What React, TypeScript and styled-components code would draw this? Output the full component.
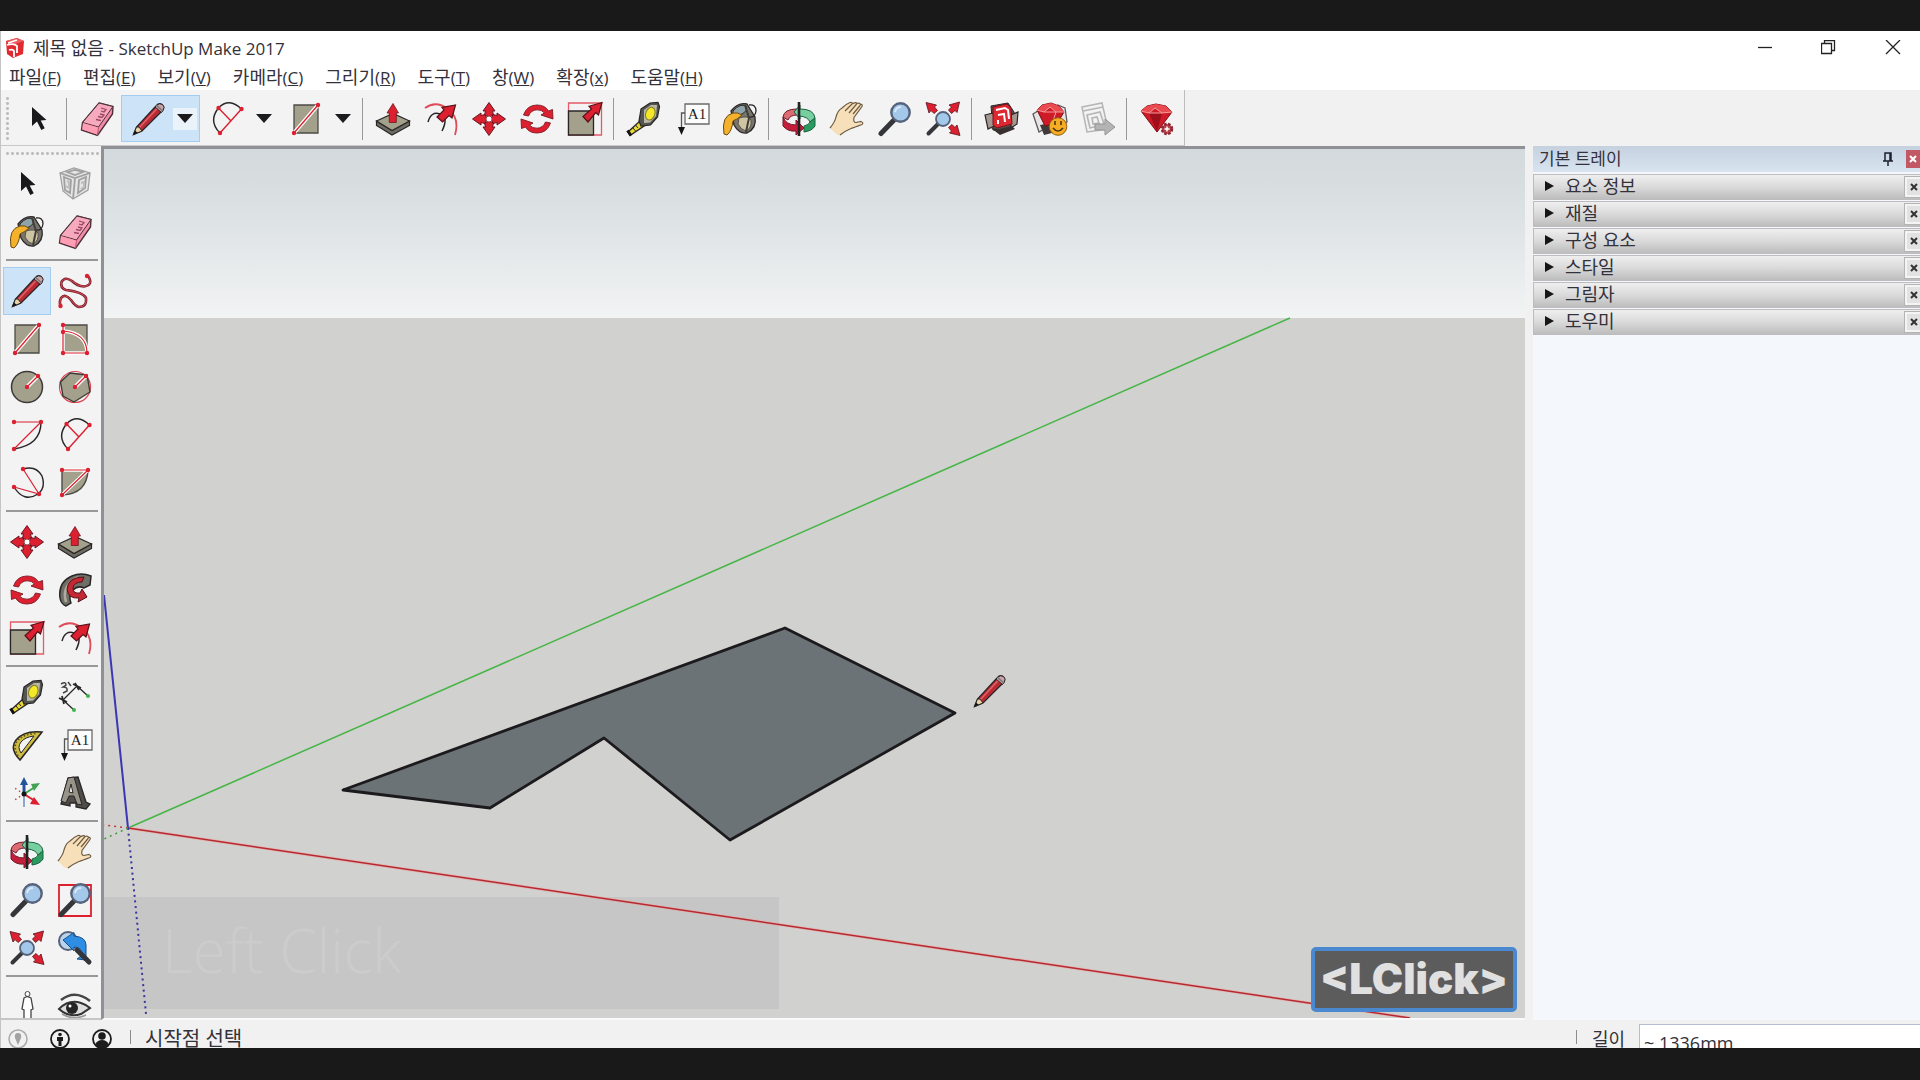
import React from "react";
import styled, { createGlobalStyle, css } from "styled-components";

const UI_FONT = `"Open Sans", "Noto Sans CJK KR", sans-serif`;
const RED = "#dc2030";
const INK = "#2a2627";
const STONE = "#a3a08c";

const GlobalStyle = createGlobalStyle`
  *, *::before, *::after { box-sizing: border-box; }
  body { margin: 0; background: #191919; font-family: ${UI_FONT}; color: #33313a; }
  button { margin: 0; padding: 0; border: 0; background: none; font: inherit; color: inherit; }
`;

/* ---------- window frame ---------- */

const Screen = styled.div`
  height: 100vh;
  padding: 31px 0 32px;
  background: #191919;
  overflow: hidden;
`;

const Window = styled.div`
  display: flex;
  flex-direction: column;
  height: 100%;
  background: #f1f1f1;
  border-left: 1px solid #c4c4c4;
  overflow: hidden;
`;

const TitleBar = styled.header`
  display: flex;
  align-items: center;
  flex: none;
  height: 34px;
  padding-left: 4px;
  background: #fff;
`;

const Title = styled.h1`
  flex: 1;
  margin: 0 0 0 8px;
  font-size: 18px;
  line-height: 24px;
  font-weight: 400;
`;

const WindowButtons = styled.div`
  display: flex;
  gap: 10px;
`;

const WindowButton = styled.button`
  display: grid;
  place-items: center;
  width: 54px;
  height: 30px;
`;

const MenuBar = styled.nav`
  display: flex;
  flex: none;
  gap: 22px;
  height: 25px;
  padding-left: 8px;
  background: #fff;
`;

const MenuItem = styled.button`
  font-size: 18px;
  line-height: 24px;
  white-space: nowrap;
`;

const Latin = styled.span`
  font-size: 17px;
`;

/* ---------- tool bars ---------- */

const TopStrip = styled.div`
  display: flex;
  flex: none;
  height: 56px;
  background: #f1f1f1;
`;

const TopTools = styled.div`
  display: flex;
  align-items: center;
  padding: 2px 3px 0 4px;
  background: #f3f3f4;
  border-right: 1px solid #bcbcbe;
  border-bottom: 1px solid #c8c8ca;
`;

const Grip = styled.span<{ $across?: boolean }>`
  flex: none;
  ${(p) =>
    p.$across
      ? css`
          width: 94px;
          height: 4px;
          margin: 5px 0 5px 2px;
        `
      : css`
          width: 5px;
          height: 46px;
          margin-right: 4px;
        `}
  background-image: radial-gradient(circle, #bdbdbd 1px, transparent 2px);
  background-size: 5px 5px;
`;

const ToolButton = styled.button<{ $on?: boolean }>`
  display: grid;
  place-items: center;
  flex: none;
  width: 48px;
  height: 48px;
  border: 1px solid ${(p) => (p.$on ? "#a5cdf0" : "transparent")};
  background: ${(p) => (p.$on ? "#cde3f7" : "transparent")};
`;

const Split = styled.div<{ $on?: boolean }>`
  display: flex;
  align-items: center;
  flex: none;
  width: 79px;
  height: 47px;
  border: 1px solid ${(p) => (p.$on ? "#a5cdf0" : "transparent")};
  background: ${(p) => (p.$on ? "#cde3f7" : "transparent")};
`;

const SplitMain = styled.button`
  display: grid;
  place-items: center;
  width: 51px;
  height: 45px;
`;

const SplitArrow = styled.button<{ $on?: boolean }>`
  display: grid;
  place-items: center;
  width: 24px;
  height: 22px;
  background: ${(p) => (p.$on ? "#eaf2fa" : "transparent")};
`;

const Rule = styled.span<{ $across?: boolean }>`
  flex: none;
  background: #98989a;
  ${(p) =>
    p.$across
      ? css`
          height: 2px;
          margin: 3px 3px 6px 3px;
        `
      : css`
          width: 1px;
          height: 42px;
          margin: 0 6px 0 4px;
        `}
`;

const Body = styled.div`
  display: flex;
  flex: 1;
  min-height: 0;
`;

const SideTools = styled.aside`
  display: flex;
  flex-direction: column;
  flex: none;
  width: 100px;
  padding-left: 2px;
  background: #f3f3f4;
  border-bottom: 2px solid #c6c6c8;
  overflow: hidden;
`;

const SideGroup = styled.div`
  display: grid;
  flex: none;
  grid-template-columns: 48px 48px;
`;

/* ---------- drawing area ---------- */

const Viewport = styled.main`
  position: relative;
  flex: 1;
  min-width: 0;
  border: solid #8f9196;
  border-width: 3px 0 0 3px;
  border-bottom: 2px solid #fafafa;
  background: linear-gradient(#d3d9dc 0, #dde2e4 70px, #f2f4f4 169px, #d1d1cf 169px);
  overflow: hidden;
`;

const Scene = styled.svg`
  position: absolute;
  top: 0;
  left: 0;
`;

const Caption = styled.div`
  position: absolute;
  left: 0;
  bottom: 9px;
  width: 675px;
  height: 112px;
  padding-left: 58px;
  background: #c6c6c6;
  color: #cccccc;
  font-size: 60px;
  font-weight: 300;
  line-height: 106px;
`;

const KeyBadge = styled.div`
  position: absolute;
  right: 8px;
  bottom: 6px;
  display: grid;
  place-items: center;
  width: 206px;
  height: 65px;
  border: 4px solid #4a88d0;
  border-radius: 5px;
  background: #5c5c5c;
  color: #e0e0e0;
  font: 900 42px/44px Inter, sans-serif;
  padding-bottom: 2px;
`;

/* ---------- tray ---------- */

const Tray = styled.aside`
  flex: none;
  width: 387px;
  margin-left: 8px;
  background: #f4f7fc;
  overflow: hidden;
`;

const TrayTitle = styled.div`
  display: flex;
  align-items: center;
  height: 26px;
  margin-bottom: 2px;
  padding-left: 6px;
  background: linear-gradient(#c6d1e0, #d9e4f1);
`;

const TrayName = styled.h2`
  flex: 1;
  margin: 0;
  font-size: 17px;
  line-height: 24px;
  font-weight: 400;
`;

const PinButton = styled.button`
  display: grid;
  place-items: center;
  width: 24px;
  height: 20px;
`;

const TrayClose = styled.button`
  display: grid;
  place-items: center;
  width: 14px;
  height: 18px;
  margin-left: 6px;
  background: #c25863;
`;

const Panel = styled.section`
  display: flex;
  align-items: center;
  height: 26px;
  margin-bottom: 1px;
  border: 1px solid #bdbdbf;
  border-right: 0;
  background: linear-gradient(#efefef, #dadada 50%, #bdbdbd);
`;

const PanelToggle = styled.button`
  display: flex;
  align-items: center;
  flex: 1;
  gap: 11px;
  height: 24px;
  padding: 0 0 2px 11px;
  font-size: 18px;
  line-height: 22px;
  text-align: left;
`;

const PanelClose = styled.button`
  display: grid;
  place-items: center;
  width: 15px;
  height: 20px;
  border: 2px solid #f4f4f4;
  border-right: 0;
  outline: 1px solid #b4b4b4;
  background: #e2e2e2;
`;

/* ---------- status bar ---------- */

const StatusBar = styled.footer`
  display: flex;
  align-items: center;
  flex: none;
  height: 28px;
  padding-left: 7px;
  background: #f1f1f1;
  overflow: hidden;
`;

const StatusButtons = styled.div`
  display: flex;
  gap: 22px;
  padding: 9px 18px 0 0;
`;

const StatusButton = styled.button`
  display: grid;
  place-items: center;
  width: 20px;
  height: 20px;
`;

const StatusRule = styled.span`
  width: 1px;
  height: 14px;
  margin-top: 6px;
  background: #8c8c8c;
`;

const StatusText = styled.p`
  flex: 1;
  margin: 10px 0 0 14px;
  font-size: 20px;
  line-height: 18px;
`;

const Measure = styled.label`
  margin: 10px 14px 0 15px;
  font-size: 18px;
  line-height: 18px;
`;

const MeasureInput = styled.input`
  align-self: flex-start;
  flex: none;
  width: 281px;
  height: 38px;
  margin-top: 4px;
  padding: 0 4px;
  border: 1px solid #b5bdd0;
  border-right: 0;
  background: #fff;
  color: #33313a;
  font: 18px/24px ${UI_FONT};
`;

/* ---------- icons, all on a 36 unit grid ---------- */

const Icon = ({ children }: { children: React.ReactNode }) => (
  <svg width="36" height="36" viewBox="0 0 36 36" fill="none" aria-hidden="true">
    {children}
  </svg>
);

const Dots = ({ at }: { at: number[][] }) => (
  <>
    {at.map(([x, y]) => (
      <circle key={`${x}-${y}`} cx={x} cy={y} r="2.2" fill={RED} />
    ))}
  </>
);

const PencilShape = () => (
  <>
    <path d="M3.5 33.5 6.5 26 26 5q3-3.5 6-1.5 3 2.5.5 6L12 30z" fill="#b92a33" stroke={INK} strokeWidth="1.3" />
    <path d="M9 27 28.5 6" stroke="#e0616a" strokeWidth="1.5" />
    <path d="M3.5 33.5 6.5 26l2.5 0 3 4z" fill="#e9d3a4" stroke={INK} strokeWidth="1" />
    <path d="m3.5 33.5 1.5-4 2.5 2.2z" fill="#111" />
    <path d="m25 6 6.5 5.5 1.5-2q2.5-3.5-.5-6-3-2-6 1z" fill="#c9a3a6" stroke={INK} />
    <path d="m26.5 4.5 6 5.3" stroke="#777" strokeWidth="1.5" />
  </>
);

const FatArrow = () => (
  <path d="M35 1.5 31.5 14l-2.8-2.3L21 21l-5-5.5 8.5-7.5L22 5.2z" fill={RED} stroke="#571018" strokeWidth="1.2" />
);

const GlassShape = () => (
  <>
    <path d="M17 19 4 32.5" stroke="#35363a" strokeWidth="5" strokeLinecap="round" />
    <circle cx="23.5" cy="11.5" r="9.2" fill="#a3c8ea" stroke="#56627a" strokeWidth="2.4" />
    <path d="M18 11q1-5 6-5" stroke="#d8eafa" strokeWidth="2" />
  </>
);

const SelectIcon = () => (
  <Icon>
    <path d="M12 6v19l5-4.5 4.3 8.5 3.4-1.8-4-7.7L26.5 19z" fill="#19191b" />
  </Icon>
);

const EraserIcon = () => (
  <Icon>
    <path d="M20 2 34 5.5 33.5 13 18.5 34.5 2.5 29l1-7.5z" fill="#f48aa6" stroke="#4c3038" strokeWidth="1.4" />
    <path d="M20 2 34 5.5 19.5 26l-16-4.5z" fill="#f7a9bd" stroke="#4c3038" />
    <path d="m4 22 15.3 4.5-1 7L3.2 28.5z" fill="#ff9db5" />
    <path d="m22 7 5 1.5-2 2.5-3-1m-1 3 4 1-2 2.5-4-1m-2 3 5 1" stroke="#9c4763" strokeWidth="1.3" />
    <path d="M19.5 26 18.5 34.5" stroke="#b55872" />
  </Icon>
);

const PencilIcon = () => (
  <Icon>
    <PencilShape />
  </Icon>
);

const PieIcon = () => (
  <Icon>
    <path d="M32.5 8Q20-4 9.500 7Q-1 20 11 32" stroke={INK} strokeWidth="1.400" />
    <path d="M32.5 8 11 32M9.500 7 22 20" stroke={RED} strokeWidth="1.400" />
    <Dots at={[[32.5, 8], [11, 32], [9.5, 7]]} />
  </Icon>
);

const RectIcon = () => (
  <Icon>
    <path d="M6 4h24v28H6z" fill={STONE} stroke="#4d4b44" strokeWidth="1.3" />
    <path d="M6 32 30 4" stroke="#fff" strokeWidth="4" />
    <path d="M6 32 30 4" stroke={RED} strokeWidth="1.3" />
    <Dots at={[[6, 32], [30, 4]]} />
  </Icon>
);

const PushPullIcon = () => (
  <Icon>
    <path d="M1.5 20v4.5L17 34l17.5-9.5V20L17 29.5z" fill="#6d6c62" stroke={INK} strokeWidth="1.2" />
    <path d="M1.5 20 18 12.5 34.5 20 17 29.5z" fill={STONE} stroke={INK} strokeWidth="1.2" />
    <path d="M18 2.5 23.5 12h-2.2v9.5h-7V12H12z" fill={RED} stroke="#6d1820" strokeWidth=".8" />
  </Icon>
);

const OffsetIcon = () => (
  <Icon>
    <path d="M2 7Q13-1 25 8t7 26" stroke="#dd4c58" strokeWidth="1.8" />
    <path d="M5 21Q8 10 17 13t2 17" stroke={INK} strokeWidth="1.5" />
    <path d="M32.5 4 29 17l-3-2.5L19.5 21 14 16l7-7-2-2.5z" fill={RED} stroke="#571018" strokeWidth="1.2" />
  </Icon>
);

const MoveIcon = () => (
  <Icon>
    {[0, 90, 180, 270].map((a) => (
      <path key={a} transform={`rotate(${a} 18 18)`} d="M18 1.5 24 10h-2.5l1 4-4.5 2-4.5-2 1-4H12z" fill={RED} stroke="#571018" strokeWidth=".9" />
    ))}
    <circle cx="18" cy="18" r="2.5" fill="#fff" />
  </Icon>
);

const RotateIcon = () => (
  <Icon>
    {[0, 180].map((a) => (
      <path key={a} transform={`rotate(${a} 18 18)`} d="M4.5 14Q8 4 18 4q8 0 11.5 6l4-1.5L34 18l-12-4 3.5-2Q22.5 8.500 18 8.800 12 9 9.500 15z" fill={RED} stroke="#7d1822" strokeWidth=".9" />
    ))}
  </Icon>
);

const ScaleIcon = () => (
  <Icon>
    <path d="M1.5 2h33v32h-33z" stroke="#e25b66" strokeWidth="1.3" />
    <path d="M1.5 10h25v24h-25z" fill={STONE} stroke={INK} strokeWidth="1.3" />
    <FatArrow />
  </Icon>
);

const TapeIcon = () => (
  <Icon>
    <path d="M14 20 2 31l2 3.5L18 25z" fill="#e9d934" stroke={INK} strokeWidth="1.3" />
    <path d="m1.5 29.5 3.5 5" stroke="#111" strokeWidth="3" />
    <path d="M15 8 24 2l8-.5 1.500 4-2 10.500-7 8-9.500 1-2-5z" fill="#55554f" stroke={INK} strokeWidth="1.2" />
    <path d="m18 9 7-5 6 0-1 11-6 6.500-6 .5z" fill="#b8b7a8" />
    <ellipse cx="24.5" cy="12.5" rx="4.5" ry="6.5" transform="rotate(20 24 12)" fill="#f4e827" stroke="#827a20" />
    <path d="m7 27 2.500 3m0-6 2.500 3" stroke={INK} />
  </Icon>
);

const TextIcon = () => (
  <Icon>
    <path d="M11 3h24v20H11z" fill="#fcfcfc" stroke="#6a6a6a" strokeWidth="1.3" />
    <path d="M11 12H7.5v15" stroke="#555" strokeWidth="1.3" />
    <path d="M4 26h7l-3.500 8z" fill="#151515" />
    <text x="23" y="18" textAnchor="middle" fontFamily="Liberation Serif, serif" fontSize="15" fill="#222">A1</text>
  </Icon>
);

const PaintIcon = () => (
  <Icon>
    <path d="M9 10Q16 1 25 3l8 13q2 11-8 16-8 1-13-8z" fill="#77756c" stroke={INK} strokeWidth="1.3" />
    <path d="M11 10Q18 2 24 5q2 5-4 8t-9 3z" fill="#8fa4aa" stroke={INK} />
    <path d="M17 17q9-3 12 2 1 8-5 11-5-1-8-7z" fill="#cfc4a2" stroke="#57534a" />
    <path d="M27 4q7-1 7 6-1 7-7 6" stroke={INK} strokeWidth="1.3" />
    <path d="M2 33Q-1 15 11 12q5-1 9 2-4 4-9 6-1 10-6 14z" fill="#f4b22c" stroke="#6b4b14" />
    <path d="m23 4 4 13-3 14" stroke="#403e3a" strokeWidth="2" />
  </Icon>
);

const OrbitIcon = () => (
  <Icon>
    <path d="M16 8Q3 8 2 16l5 3q2-5 9-5z" fill="#dd6b72" stroke="#6e1a27" />
    <path d="M2 16v9q5 6 13 5v4l8-7-8-8v5Q5 24 2 16z" fill="#c41f3a" stroke="#6e1a27" />
    <path d="M19 4v4q14 0 15 9l-5 4q-2-5-10-6v3l-6-7z" fill="#77cfa0" stroke="#1b6140" />
    <path d="M34 17v8q-3 5-11 6v-6q5-1 6-4z" fill="#2b9a5e" stroke="#1b6140" />
    <path d="M18 1v34" stroke="#222" strokeWidth="2.6" />
  </Icon>
);

const PanIcon = () => (
  <Icon>
    <path d="M1 27Q6 21 7 16 9 9 13 7 17 3 21 1.500q3-.5 2 1.500 4-2.500 5-.5 3-1 3.500 1 2.500-.5 1.500 2l-8 11q-1 5 2 5l5-1q3 1.500 1 3-8 3-11 4-7 3-11 6.500-3 1-6-3z" fill="#f7e0b9" />
    <path d="M1 27Q6 21 7 16 9 9 13 7 17 3 21 1.500q3-.5 2 1.500 4-2.500 5-.5 3-1 3.500 1 2.500-.5 1.500 2l-8 11q-1 5 2 5l5-1q3 1.500 1 3-8 3-11 4-7 3-11 6.500M23 3l-7 7m12-7.500L20 12M31.500 4 24 13" stroke="#6e5c44" strokeWidth="1.2" />
  </Icon>
);

const ZoomIcon = () => (
  <Icon>
    <GlassShape />
  </Icon>
);

const ZoomWindowIcon = () => (
  <Icon>
    <path d="M2 3h32v31H2z" stroke={RED} strokeWidth="1.8" />
    <GlassShape />
  </Icon>
);

const ZoomExtentsIcon = () => (
  <Icon>
    <path d="M13 23 3.500 32.500" stroke="#35363a" strokeWidth="4" strokeLinecap="round" />
    {[0, 90, 180].map((a) => (
      <path key={a} transform={`rotate(${a} 18 18)`} d="M1 1.500 11.500 4 9.500 6l3 3.500-3.500 3L6 9.500 4 12z" fill={RED} stroke="#571018" strokeWidth=".8" />
    ))}
    <circle cx="18" cy="18" r="7" fill="#a3c8ea" stroke="#56627a" strokeWidth="1.8" />
  </Icon>
);

const PreviousIcon = () => (
  <Icon>
    <circle cx="11" cy="11" r="9" fill="#b9d3ea" stroke="#56627a" strokeWidth="2" />
    <path d="M6 10 17 2.500V6q12 1 12 9v15l-9-1 4-3q2-9-7-9v4z" fill="#2f8ee4" stroke="#1a4f8a" />
    <path d="m20 20 12 12" stroke="#35363a" strokeWidth="5" strokeLinecap="round" />
  </Icon>
);

const WarehouseIcon = () => (
  <Icon>
    <path d="m7 5 17-3 6 9 1 13-9 5-13 0z" fill="#5a4d4c" stroke={INK} />
    <path d="m1 14 8-2 3 12-8 4zm26 0 7-3-1 12-6 4z" fill="#a49990" stroke={INK} strokeWidth="1.2" />
    <path d="m9 6 14-3 4 4 1 16-15 4-4-3z" fill="#dd2731" stroke="#7d1119" />
    <path d="m12 9 9-2 3 2 1 9m-11-4 6-1 1 8m-7-2 0 4" stroke="#fff" strokeWidth="2" />
    <path d="m7 27 8 1 13-3 3 3-15 6z" fill="#38302f" />
  </Icon>
);

const GemShape = () => (
  <>
    <path d="m2 10 6-5 9-2 10 2 6 6-15 20z" fill="#cf1a27" stroke="#7c0d16" />
    <path d="m2 10 8 2 6-5 7 5 10-1-6-6-10-2-9 2z" fill="#ea4b50" />
    <path d="m10 12 13 0-5 19z" fill="#9f0e1b" />
    <path d="m2 10 8 2 6-5 7 5 10-1M10 12h13" stroke="#f49b9b" />
  </>
);

const ExtensionWarehouseIcon = () => (
  <Icon>
    <path d="m1 13 8-5 5 19-7 4zm25-9 7 3 2 14-6 4z" fill="#e6e4e4" stroke="#5e5858" strokeWidth="1.3" />
    <path d="m8 24 12-2 4 9-12 3z" fill="#403a3a" />
    <path d="m5 9 5-5 9-2 8 3 5 6-6 10-13 4z" fill="#cf1a27" stroke="#7c0d16" />
    <path d="m5 9 7 2 6-5 6 5 8 0-5-6-8-3-9 2z" fill="#ea4b50" />
    <path d="m5 9 7 2 6-5 6 5 8 0M12 11h12l-4 12" stroke="#f49b9b" />
    <circle cx="26" cy="25.500" r="8.800" fill="#f6ad23" stroke="#8f5b10" />
    <path d="M23 20v4m6-4v4m-8 3q5 6 10 0" stroke="#4e3510" strokeWidth="1.6" />
  </Icon>
);

const LayoutIcon = () => (
  <Icon>
    <path d="m2 6 20-4 6 26-21 3z" fill="#f2f2f2" stroke="#b5b5b5" strokeWidth="1.5" />
    <path d="m3 10 20-4M7 14l13-3 4 12-14 4zM12 17l5-1 2 6-6 1z" stroke="#b5b5b5" strokeWidth="1.6" />
    <path d="M15 23h10v-5l10 8-10 8v-5H15z" fill="#b4b4b4" stroke="#949494" />
  </Icon>
);

const ExtensionManagerIcon = () => (
  <Icon>
    <GemShape />
    <circle cx="28" cy="28" r="5" fill="#b4434c" stroke="#8f2530" strokeWidth="2.5" strokeDasharray="2.5 1.5" />
    <path d="M28 25.500v5M25.500 28h5" stroke="#fff" strokeWidth="1.5" />
  </Icon>
);

const ComponentIcon = () => (
  <Icon>
    <path d="m3 7 14-5 16 5-2 17-15 9L6 25z" fill="#e4e4e4" stroke="#a0a0a0" strokeWidth="1.3" />
    <path d="m3 7 15 5 15-5M18 12l-2 21M7 11l7 3-1 13-5-3zM22 14l7-3-1 11-7 5zM10 6l8-2 8 2-8 3z" stroke="#a0a0a0" strokeWidth="1.8" />
    <path d="m10 15 2 1v6l-3-2m15-3 3-1v5l-3 2" stroke="#bdbdbd" strokeWidth="2" />
  </Icon>
);

const FREEHAND = "M31 3Q37 12 27 13.500 20 13 15 8 8 3 4.500 9 3 15 9 17q17 2 20 8 1 9-7 9-4-1-8-7-6-7-10-2-2 4-.5 8";

const FreehandIcon = () => (
  <Icon>
    <path d={FREEHAND} stroke="#7c222c" strokeWidth="2.6" />
    <path d={FREEHAND} stroke="#d84a55" />
    <Dots at={[[30, 3], [3.5, 33]]} />
  </Icon>
);

const RotatedRectIcon = () => (
  <Icon>
    <path d="M6 4h24v28H6z" fill={STONE} stroke="#4d4b44" strokeWidth="1.3" />
    <path d="M6 4v28h24Q30 12 6 10" stroke="#fff" strokeWidth="3.5" />
    <path d="M6 4v28h24Q30 12 6 10" stroke={RED} strokeWidth="1.2" />
    <Dots at={[[6, 4], [6, 11], [6, 32], [30, 32]]} />
  </Icon>
);

const CircleIcon = () => (
  <Icon>
    <circle cx="18" cy="18" r="15.500" fill={STONE} stroke="#3c3b38" strokeWidth="1.5" />
    <path d="M18 18 29 7" stroke="#fff" strokeWidth="4" />
    <path d="M18 18 29 7" stroke={RED} strokeWidth="1.3" />
    <Dots at={[[18, 18], [29, 7]]} />
  </Icon>
);

const PolygonIcon = () => (
  <Icon>
    <circle cx="18" cy="18" r="15.500" stroke="#df4653" strokeWidth="1.2" />
    <path d="M3.500 13 13 4l17 2 3 17-16 10L6 27z" fill={STONE} stroke="#3c3b38" strokeWidth="1.4" />
    <path d="M18 18 29 7" stroke="#fff" strokeWidth="4" />
    <path d="M18 18 29 7" stroke={RED} strokeWidth="1.3" />
    <Dots at={[[18, 18], [29, 7]]} />
  </Icon>
);

const ArcIcon = () => (
  <Icon>
    <path d="M32 5q0 23-27 27" stroke={INK} strokeWidth="1.4" />
    <path d="M5 5h27L5 32" stroke={RED} strokeWidth="1.2" />
    <Dots at={[[5, 5], [32, 5], [5, 32]]} />
  </Icon>
);

const ThreePointArcIcon = () => (
  <Icon>
    <path d="M14 4q13-4 19 7 4 12-4 18-14 9-24-7" stroke={INK} strokeWidth="1.4" />
    <path d="m14 4 16 25L5 22" stroke={RED} strokeWidth="1.2" />
    <Dots at={[[14, 4], [30, 29], [5, 22]]} />
  </Icon>
);

const SectorIcon = () => (
  <Icon>
    <path d="M5 5h26q-1 24-26 25z" fill={STONE} stroke="#4d4b44" strokeWidth="1.4" />
    <path d="M5 5h26L5 30" stroke="#fff" strokeWidth="3.5" />
    <path d="M5 5h26L5 30" stroke={RED} strokeWidth="1.2" />
    <Dots at={[[5, 5], [31, 5], [5, 30]]} />
  </Icon>
);

const FollowMeIcon = () => (
  <Icon>
    <path d="M3 26Q1 10 15 4q9-4 19 0l-1 9-6 3q-6-3-11 2-5 6-2 13l-5 3q-5-2-6-8z" fill="#706f67" stroke={INK} strokeWidth="1.5" />
    <path d="M9 30Q5 17 15 9l6-4" stroke="#aeac9d" strokeWidth="2.5" />
    <path d="M27 5Q11 5 10 17q1 10 12 9l-1 4 9-5-5-8-2 4q-7 1-7-5 1-6 9-6z" fill="#c52833" stroke="#571018" />
  </Icon>
);

const DimensionIcon = () => (
  <Icon>
    <path d="m6 21 14-14M6 21l11 10M20 7l11 10" stroke={INK} strokeWidth="1.3" />
    <path d="m2 19 8 4m-5-6 2 8m9-20 8 4m-6-5 4 7" stroke={INK} strokeWidth="1.8" />
    <path d="M4 5q5-3 5 1l-3 2q5 0 4 4l-4 2m5-11 3 4" stroke="#444" strokeWidth="1.5" />
    <circle cx="17" cy="31" r="2" fill="#43b24b" />
    <circle cx="31" cy="17" r="2" fill="#43b24b" />
  </Icon>
);

const ProtractorIcon = () => (
  <Icon>
    <path d="M11 33Q0 22 7 13 15 3 33 5z" fill="#cdbb42" stroke={INK} strokeWidth="1.5" />
    <path d="M12 26Q8 20 12 15t13-6z" fill="#f3f3f4" stroke={INK} />
    <path d="M9 29Q3 19 9 13T28 6" stroke="#5e5519" strokeWidth="2" strokeDasharray="1.5 2" />
  </Icon>
);

const AxesIcon = () => (
  <Icon>
    <path d="M15 19 4 12m11 7L4 26" stroke="#c64242" strokeWidth="1.5" strokeDasharray="1.5 3" />
    <path d="M15 19v13" stroke="#8fa8d0" strokeWidth="2" />
    <path d="M15 19V8" stroke="#23549b" strokeWidth="3" />
    <path d="m11 10 4-8 4 8z" fill="#23549b" />
    <path d="m15 19 11-7" stroke="#44a250" strokeWidth="2" />
    <path d="m22 9 9-1-6 8z" fill="#44a250" />
    <path d="m15 19 11 7" stroke={RED} strokeWidth="2" />
    <path d="m25 22 6 8-10-1z" fill={RED} />
    <circle cx="15" cy="19" r="2.5" fill="#161616" />
  </Icon>
);

const ThreeDTextIcon = () => (
  <Icon>
    <path d="m11 3 10-1 8 25 4 2-4 5-10-2 0-4-6 0v3l-9-2z" fill="#4e4d49" stroke={INK} strokeWidth="1.3" />
    <path d="m11 3 6-1 8 28-5-1-3-8h-5l-3 7-5-2z" fill="#97958a" stroke={INK} />
    <path d="m14 9 2 9-4-1z" fill="#f3f3f4" stroke={INK} />
  </Icon>
);

const PositionIcon = () => (
  <Icon>
    <circle cx="18.5" cy="5" r="2.5" fill="#fff" stroke="#444" />
    <path d="m15 9 3-1.500 4 1.500 2 11-2 1v9h-7v-9l-2-1z" fill="#fff" stroke="#444" strokeWidth="1.3" />
    <path d="M13 31h4m4 0h4" stroke="#c32532" strokeWidth="2" />
  </Icon>
);

const LookIcon = () => (
  <Icon>
    <path d="M4 11Q18 0 33 12" stroke="#444" strokeWidth="2.5" />
    <path d="M2 20Q12 10 24 14q6 2 9 5-6 4-9 6-12 4-22-5z" fill="#ddd" stroke="#333" strokeWidth="2" />
    <circle cx="15" cy="19" r="6" fill="#242424" />
    <circle cx="13" cy="17" r="1.5" fill="#fff" />
    <path d="M5 25q12 7 24 1" stroke="#999" strokeWidth="1.5" />
  </Icon>
);

const DownTriangle = () => (
  <svg width="16" height="10" viewBox="0 0 16 10" aria-hidden="true">
    <path d="M0 0h16L8 9z" fill="#1b1b1d" />
  </svg>
);

const SmallCross = ({ color }: { color: string }) => (
  <svg width="8" height="8" viewBox="0 0 8 8" stroke={color} strokeWidth="2" aria-hidden="true">
    <path d="m1 1 6 6M7 1 1 7" />
  </svg>
);

const Logo = () => (
  <svg width="20" height="20" viewBox="0 0 20 20" aria-hidden="true">
    <path d="M1 3 12 0l7 3-1 13-10 4-6-4z" fill="#e02a32" />
    <path d="m1 3 11-3 7 3-9 3z" fill="#ef5a5d" />
    <path d="M2 7q7-2 10 1v7M4 12q4-1 5 1v6M3 5l9-3" fill="none" stroke="#fff" strokeWidth="1.8" />
  </svg>
);

/* ---------- data ---------- */

type Tool = { name: string; icon: React.ComponentType; on?: boolean };

const splitTools: Tool[] = [
  { name: "선", icon: PencilIcon, on: true },
  { name: "호", icon: PieIcon },
  { name: "직사각형", icon: RectIcon },
];

const topGroups: Tool[][] = [
  [
    { name: "밀기/당기기", icon: PushPullIcon },
    { name: "오프셋", icon: OffsetIcon },
    { name: "이동", icon: MoveIcon },
    { name: "회전", icon: RotateIcon },
    { name: "배율", icon: ScaleIcon },
  ],
  [
    { name: "줄자", icon: TapeIcon },
    { name: "텍스트", icon: TextIcon },
    { name: "페인트통", icon: PaintIcon },
  ],
  [
    { name: "궤도", icon: OrbitIcon },
    { name: "이동 보기", icon: PanIcon },
    { name: "확대/축소", icon: ZoomIcon },
    { name: "범위 확대", icon: ZoomExtentsIcon },
  ],
  [
    { name: "3D Warehouse", icon: WarehouseIcon },
    { name: "Extension Warehouse", icon: ExtensionWarehouseIcon },
    { name: "LayOut", icon: LayoutIcon },
  ],
  [{ name: "확장 관리자", icon: ExtensionManagerIcon }],
];

const sideGroups: Tool[][] = [
  [
    { name: "선택", icon: SelectIcon },
    { name: "구성 요소 만들기", icon: ComponentIcon },
    { name: "페인트통", icon: PaintIcon },
    { name: "지우개", icon: EraserIcon },
  ],
  [
    { name: "선", icon: PencilIcon, on: true },
    { name: "자유선", icon: FreehandIcon },
    { name: "직사각형", icon: RectIcon },
    { name: "회전된 직사각형", icon: RotatedRectIcon },
    { name: "원", icon: CircleIcon },
    { name: "다각형", icon: PolygonIcon },
    { name: "호", icon: ArcIcon },
    { name: "2점 호", icon: PieIcon },
    { name: "3점 호", icon: ThreePointArcIcon },
    { name: "파이", icon: SectorIcon },
  ],
  [
    { name: "이동", icon: MoveIcon },
    { name: "밀기/당기기", icon: PushPullIcon },
    { name: "회전", icon: RotateIcon },
    { name: "따라가기", icon: FollowMeIcon },
    { name: "배율", icon: ScaleIcon },
    { name: "오프셋", icon: OffsetIcon },
  ],
  [
    { name: "줄자", icon: TapeIcon },
    { name: "치수", icon: DimensionIcon },
    { name: "각도기", icon: ProtractorIcon },
    { name: "텍스트", icon: TextIcon },
    { name: "축", icon: AxesIcon },
    { name: "3D 텍스트", icon: ThreeDTextIcon },
  ],
  [
    { name: "궤도", icon: OrbitIcon },
    { name: "이동 보기", icon: PanIcon },
    { name: "확대/축소", icon: ZoomIcon },
    { name: "창 확대", icon: ZoomWindowIcon },
    { name: "범위 확대", icon: ZoomExtentsIcon },
    { name: "이전", icon: PreviousIcon },
  ],
  [
    { name: "카메라 배치", icon: PositionIcon },
    { name: "둘러보기", icon: LookIcon },
  ],
];

const menus = [
  ["파일", "F"],
  ["편집", "E"],
  ["보기", "V"],
  ["카메라", "C"],
  ["그리기", "R"],
  ["도구", "T"],
  ["창", "W"],
  ["확장", "x"],
  ["도움말", "H"],
];

const panels = ["요소 정보", "재질", "구성 요소", "스타일", "그림자", "도우미"];

const Tools = ({ tools }: { tools: Tool[] }) => (
  <>
    {tools.map(({ name, icon: Glyph, on }) => (
      <ToolButton key={name} $on={on} aria-label={name}>
        <Glyph />
      </ToolButton>
    ))}
  </>
);

const Drawing = () => (
  <Scene width="1421" height="869" viewBox="0 0 1421 869" fill="none" aria-label="모델">
    <path d="M24 679 1186 169" stroke="#45b545" strokeWidth="1.5" />
    <path d="m24 679 1282 190" stroke="#f0a0a0" strokeWidth="3" opacity=".6" />
    <path d="m24 679 1282 190" stroke="#b42a30" strokeWidth="1.5" />
    <path d="M0 446 24 679" stroke="#3a36b4" strokeWidth="2" />
    <path d="m24 679 18 186" stroke="#3a36a0" strokeWidth="2" strokeDasharray="2 3.6" />
    <path d="M24 679 0 676" stroke="#c03a3a" strokeWidth="1.5" strokeDasharray="2 4" />
    <path d="M24 679 0 690" stroke="#3aa03a" strokeWidth="1.5" strokeDasharray="2 4" />
    <path d="m239 641 442-162 170 85-225 127-126-102-114 70z" fill="#6b7376" stroke="#1c1a1d" strokeWidth="2.8" strokeLinejoin="round" />
    <g transform="translate(867 524)">
      <PencilShape />
    </g>
  </Scene>
);

export default function App() {
  return (
    <>
      <GlobalStyle />
      <Screen>
        <Window>
          <TitleBar>
            <Logo />
            <Title>
              제목 없음 <Latin>- SketchUp Make 2017</Latin>
            </Title>
            <WindowButtons>
              <WindowButton aria-label="최소화">
                <svg width="16" height="16" viewBox="0 0 16 16" stroke="#222" fill="none">
                  <path d="M1 7.500h14" strokeWidth="1.3" />
                </svg>
              </WindowButton>
              <WindowButton aria-label="복원">
                <svg width="16" height="16" viewBox="0 0 16 16" stroke="#222" fill="none">
                  <path d="M.5 3.500h10v10H.5zM3.500 3V.5h10v10H11" strokeWidth="1.3" />
                </svg>
              </WindowButton>
              <WindowButton aria-label="닫기">
                <svg width="16" height="16" viewBox="0 0 16 16" stroke="#222" fill="none">
                  <path d="m1 0 14 14M15 0 1 14" strokeWidth="1.3" />
                </svg>
              </WindowButton>
            </WindowButtons>
          </TitleBar>

          <MenuBar>
            {menus.map(([name, key]) => (
              <MenuItem key={key}>
                {name}
                <Latin>
                  (<u>{key}</u>)
                </Latin>
              </MenuItem>
            ))}
          </MenuBar>

          <TopStrip>
            <TopTools>
              <Grip />
              <ToolButton aria-label="선택">
                <SelectIcon />
              </ToolButton>
              <Rule />
              <ToolButton aria-label="지우개">
                <EraserIcon />
              </ToolButton>
              {splitTools.map(({ name, icon: Glyph, on }) => (
                <Split key={name} $on={on}>
                  <SplitMain aria-label={name}>
                    <Glyph />
                  </SplitMain>
                  <SplitArrow $on={on} aria-label={`${name} 목록`}>
                    <DownTriangle />
                  </SplitArrow>
                </Split>
              ))}
              {topGroups.map((group) => (
                <React.Fragment key={group[0].name}>
                  <Rule />
                  <Tools tools={group} />
                </React.Fragment>
              ))}
            </TopTools>
          </TopStrip>

          <Body>
            <SideTools>
              <Grip $across />
              {sideGroups.map((group, i) => (
                <React.Fragment key={group[0].name}>
                  {i > 0 && <Rule $across />}
                  <SideGroup>
                    <Tools tools={group} />
                  </SideGroup>
                </React.Fragment>
              ))}
            </SideTools>

            <Viewport>
              <Caption>Left Click</Caption>
              <Drawing />
              <KeyBadge>&lt;LClick&gt;</KeyBadge>
            </Viewport>

            <Tray>
              <TrayTitle>
                <TrayName>기본 트레이</TrayName>
                <PinButton aria-label="고정">
                  <svg width="12" height="14" viewBox="0 0 12 14" fill="none" stroke="#1c2030" strokeWidth="1.5">
                    <path d="M3 1h6v8H3zM1 9h10M6 9v5M8 1v8" />
                  </svg>
                </PinButton>
                <TrayClose aria-label="트레이 닫기">
                  <SmallCross color="#fff" />
                </TrayClose>
              </TrayTitle>
              {panels.map((name) => (
                <Panel key={name}>
                  <PanelToggle aria-expanded={false}>
                    <svg width="9" height="10" viewBox="0 0 9 10" aria-hidden="true">
                      <path d="M0 0v10l9-5z" fill="#161616" />
                    </svg>
                    {name}
                  </PanelToggle>
                  <PanelClose aria-label={`${name} 닫기`}>
                    <SmallCross color="#333" />
                  </PanelClose>
                </Panel>
              ))}
            </Tray>
          </Body>

          <StatusBar>
            <StatusButtons>
              <StatusButton aria-label="지리적 위치">
                <svg width="20" height="20" viewBox="0 0 20 20" fill="none">
                  <circle cx="10" cy="10" r="9" stroke="#aaa" strokeWidth="1.5" />
                  <path d="M10 16 7 9q-1-5 3-5t3 5z" fill="#a2a2a2" />
                </svg>
              </StatusButton>
              <StatusButton aria-label="제작자">
                <svg width="20" height="20" viewBox="0 0 20 20" fill="none">
                  <circle cx="10" cy="10" r="9" stroke="#1c1c1c" strokeWidth="1.8" />
                  <circle cx="10" cy="5.5" r="1.8" fill="#1c1c1c" />
                  <path d="M7 8h6v4h-1.500v5h-3v-5H7z" fill="#1c1c1c" />
                </svg>
              </StatusButton>
              <StatusButton aria-label="로그인">
                <svg width="20" height="20" viewBox="0 0 20 20" fill="none">
                  <circle cx="10" cy="10" r="9" stroke="#1c1c1c" strokeWidth="1.8" />
                  <circle cx="10" cy="7" r="3.8" fill="#1c1c1c" />
                  <path d="M3.500 15q2-4 6.500-4t6.500 4l-3 4h-7z" fill="#1c1c1c" />
                </svg>
              </StatusButton>
            </StatusButtons>
            <StatusRule />
            <StatusText>시작점 선택</StatusText>
            <StatusRule />
            <Measure htmlFor="length">길이</Measure>
            <MeasureInput id="length" defaultValue="~ 1336mm" />
          </StatusBar>
        </Window>
      </Screen>
    </>
  );
}
